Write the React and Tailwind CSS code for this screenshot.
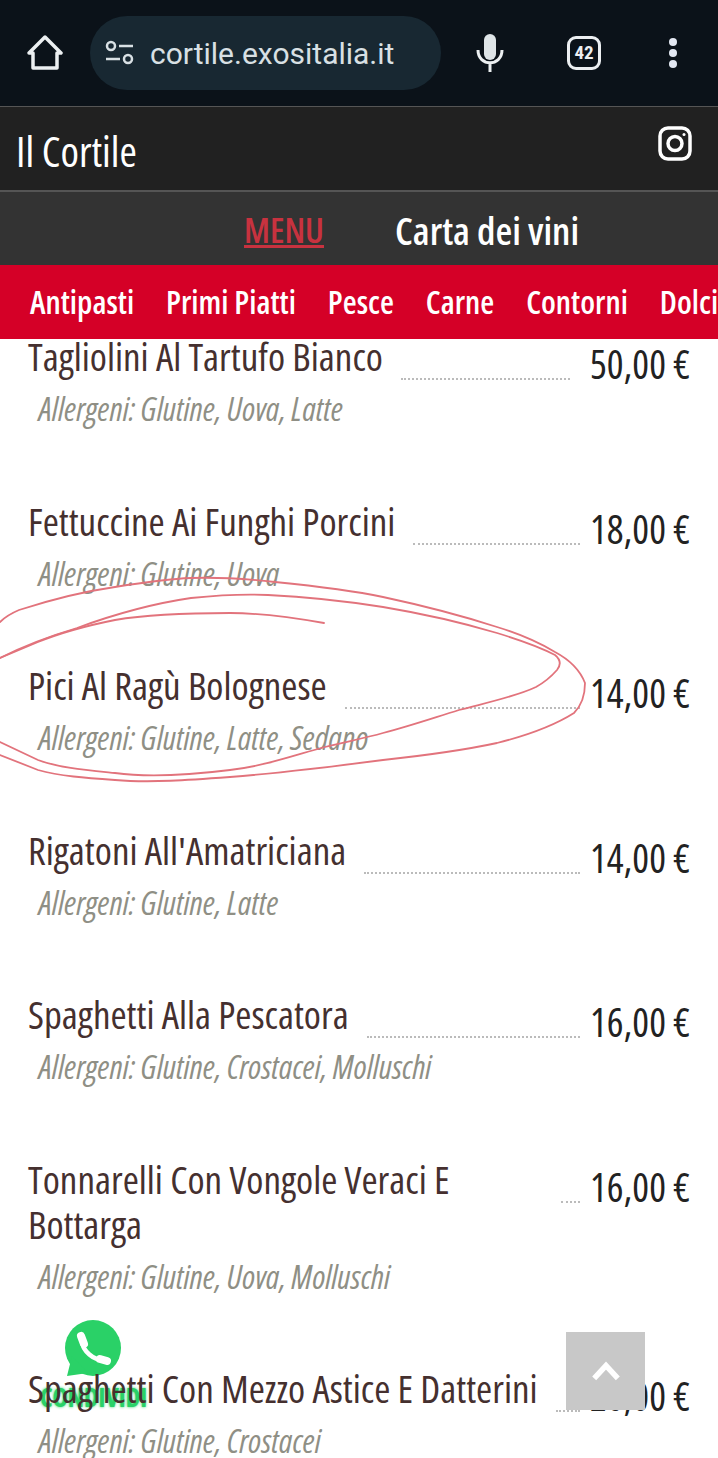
const dishes = [
    { name: 'Tagliolini Al Tartufo Bianco', allergens: 'Glutine, Uova, Latte', price: '50,00 €', wide: true },
    { name: 'Fettuccine Ai Funghi Porcini', allergens: 'Glutine, Uova', price: '18,00 €' },
    { name: 'Pici Al Ragù Bolognese', allergens: 'Glutine, Latte, Sedano', price: '14,00 €' },
    { name: "Rigatoni All'Amatriciana", allergens: 'Glutine, Latte', price: '14,00 €' },
    { name: 'Spaghetti Alla Pescatora', allergens: 'Glutine, Crostacei, Molluschi', price: '16,00 €' },
    { name: 'Tonnarelli Con Vongole Veraci E Bottarga', allergens: 'Glutine, Uova, Molluschi', price: '16,00 €' },
    { name: 'Spaghetti Con Mezzo Astice E Datterini', allergens: 'Glutine, Crostacei', price: '26,00 €' },
];

const categories = ['Antipasti', 'Primi Piatti', 'Pesce', 'Carne', 'Contorni', 'Dolci'];

function Dish({ dish }) {
    return (
        <div className="pb-[66.5px]">
            <div className="flex items-start">
                <h3 className="max-w-[515px] text-[39px] leading-[45px] font-medium text-[#45302f]">{dish.name}</h3>
                <div className="flex-1 mt-[45px] -mb-[2px] ml-[18px] border-b-2 border-dotted border-[#bbb]" />
                <span className={`${dish.wide ? 'w-[120px]' : 'w-[110px]'} mt-[9px] -mb-[9px] text-right text-[39.5px] leading-[45px] whitespace-nowrap text-[#222]`}>{dish.price}</span>
            </div>
            <p className="mt-[8px] pl-[11px] text-[32.5px] leading-[45px] italic text-[#8f8f85]">Allergeni: {dish.allergens}</p>
        </div>
    );
}

export default function App() {
    return (
        <div className="relative h-[1458px] w-[718px] overflow-hidden flex flex-col bg-white font-['Open_Sans',sans-serif] font-stretch-[75%]">
            {/* browser bar */}
            <div className="h-[107px] shrink-0 flex items-center bg-[#0b1219] border-b border-[#555] font-['Roboto',sans-serif] font-stretch-[100%]">
                <svg className="ml-[27px] w-[36px] h-[36px]" viewBox="0 0 36 36" fill="none" stroke="#eceff1" strokeWidth="3.5" strokeLinejoin="round">
                    <path d="M18 2 L34 18 H30 V33 H6 V18 H2 Z" />
                </svg>
                <div className="ml-[27px] w-[351px] h-[74px] rounded-[37px] bg-[#182832] flex items-center">
                    <svg className="ml-[15px] w-[29px] h-[26px]" viewBox="0 0 29 26" fill="none" stroke="#d8e0e4" strokeWidth="2.5">
                        <circle cx="6" cy="6" r="4" />
                        <path d="M14 6 H28 M1 19 H15" />
                        <circle cx="23" cy="19" r="4" />
                    </svg>
                    <span className="ml-[16px] text-[30px] text-[#d8e0e4]">cortile.exositalia.it</span>
                </div>
                <svg className="ml-[35px] w-[28px] h-[40px]" viewBox="0 0 28 40" fill="none">
                    <rect x="8" y="1" width="12" height="26" rx="6" fill="#dfe5e8" />
                    <path d="M2 17 C2 34 26 34 26 17 M14 29 V39" stroke="#eceff1" strokeWidth="3" />
                </svg>
                <div className="ml-[63px] w-[34px] h-[34px] rounded-[9px] border-[3.5px] border-[#eceff1] flex items-center justify-center text-[19px] font-bold font-stretch-[75%] text-[#eceff1]">42</div>
                <div className="ml-[68px] flex flex-col gap-[3px]">
                    <span className="w-[8px] h-[8px] rounded-full bg-[#e3e8f2]" />
                    <span className="w-[8px] h-[8px] rounded-full bg-[#e3e8f2]" />
                    <span className="w-[8px] h-[8px] rounded-full bg-[#e3e8f2]" />
                </div>
            </div>

            {/* site header */}
            <div className="h-[85px] shrink-0 flex items-center justify-between pl-[16px] pr-[26px] bg-[#212121] border-b-2 border-[#555]">
                <span className="pt-[3px] text-[42px] font-medium text-white">Il Cortile</span>
                <svg className="w-[34px] h-[35px] mb-[10px]" viewBox="0 0 34 35" fill="none" stroke="#fff" strokeWidth="3.5">
                    <rect x="2" y="2" width="30" height="31" rx="8" />
                    <circle cx="17" cy="17.5" r="7" />
                    <circle cx="26" cy="8.5" r="1.5" fill="#fff" stroke="none" />
                </svg>
            </div>

            {/* menu switch */}
            <div className="h-[73px] shrink-0 flex items-center gap-[71px] pl-[244px] pt-[4px] bg-[#333]">
                <a className="text-[35px] font-semibold text-[#c8323f] underline decoration-[3px]">MENU</a>
                <a className="text-[38.5px] font-semibold text-white">Carta dei vini</a>
            </div>

            {/* categories */}
            <div className="h-[74px] shrink-0 flex items-center gap-[32px] pl-[30px] bg-[#d50027] overflow-hidden">
                {categories.map(c => (
                    <span key={c} className="text-[32px] font-semibold text-white whitespace-nowrap">{c}</span>
                ))}
            </div>

            {/* share button, the dish names run over it */}
            <div className="absolute left-[40px] top-[1318px] w-[107px] flex flex-col items-center">
                <svg className="w-[62px] h-[62px]" viewBox="0 0 62 62">
                    <circle cx="30" cy="30" r="28" fill="#2ad167" />
                    <path d="M4 58 L9 38 L25 55 Z" fill="#2ad167" />
                    <path d="M19 22 C19 33 31 43 42 42" fill="none" stroke="#fff" strokeWidth="4.5" strokeLinecap="round" />
                    <path d="M18 18 L21 26 M37 41 L44 43" fill="none" stroke="#fff" strokeWidth="8" strokeLinecap="round" />
                </svg>
                <span className="mt-[4px] text-[26px] leading-[26px] font-bold text-[#2ad167] [text-shadow:0_0_3px_#2ad167]">CONDIVIDI</span>
            </div>

            {/* dishes */}
            <div className="relative flex-1 overflow-hidden px-[28px]">
                <div className="-mt-[6px]">
                    {dishes.map(d => <Dish key={d.name} dish={d} />)}
                </div>
            </div>

            {/* pen annotation on the screenshot */}
            <svg className="absolute inset-0 pointer-events-none" width="718" height="1458" fill="none" stroke="#e2737c" strokeWidth="1.8" strokeLinecap="round">
                <path d="M324 623 C290 617 260 613 230 613 C190 613 150 614 115 620 C85 626 60 633 38 642 L0 658" />
                <path d="M0 658 C25 645 50 636 77 628 C115 614 150 604 191 598 C220 595 245 594 268 595 C310 597 345 601 383 607 C425 614 460 622 497 633 C520 640 540 647 555 655 C561 660 561 665 557 670 C550 678 545 682 536 687 C515 697 485 703 459 710 C430 719 410 726 383 733 C365 738 345 742 325 747 C295 755 265 766 230 770 C190 775 150 778 115 773 C85 770 60 768 38 760 L0 742" />
                <path d="M0 622 C5 617 12 613 19 610 C50 600 80 592 115 587 C140 583 165 579 191 578 C220 577 248 579 275 582 C315 586 350 590 383 597 C425 606 460 615 497 627 C520 634 540 643 555 652 C570 660 580 670 585 683 C585 695 582 705 574 713 C555 725 525 736 497 743 C460 751 420 756 383 760 C330 767 280 773 230 777 C190 780 150 783 115 780 C85 778 60 776 38 770 L0 755" />
            </svg>

            {/* back to top */}
            <div className="absolute left-[566px] top-[1332px] w-[79px] h-[78px] bg-[#c8c8c8] flex items-center justify-center">
                <svg className="w-[30px] h-[20px]" viewBox="0 0 32 22" fill="none" stroke="#fff" strokeWidth="6">
                    <path d="M3 19 L16 5 L29 19" />
                </svg>
            </div>
        </div>
    );
}
